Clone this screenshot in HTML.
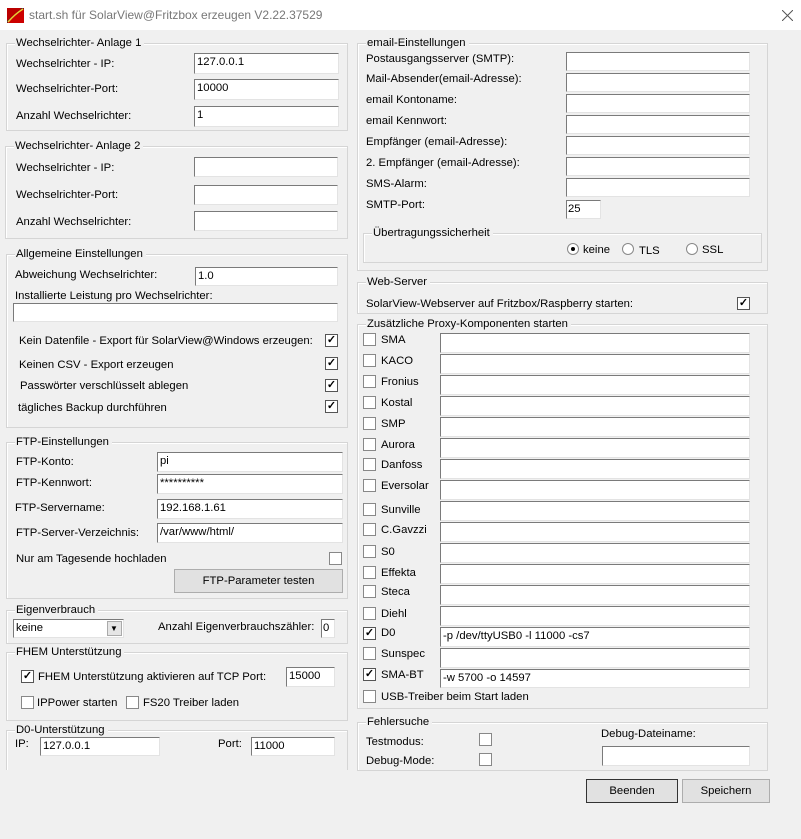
<!DOCTYPE html>
<html><head><meta charset="utf-8"><style>
*{box-sizing:border-box;margin:0;padding:0}
body{width:801px;height:839px;background:#f0f0f0;font-family:"Liberation Sans",Arial,sans-serif;font-size:11.3px;color:#000;position:relative;overflow:hidden}
.a{position:absolute}
.t{position:absolute;line-height:14px;white-space:nowrap}
.i{position:absolute;background:#fff;border:1px solid;border-color:#7a7a7a #e3e3e3 #e3e3e3 #7a7a7a;line-height:17px;padding-left:2px;white-space:nowrap;overflow:hidden}
.g{position:absolute;border:1px solid #d5d5d5;box-shadow:inset 1px 1px 0 #fff}
.gl{position:absolute;top:-8px;left:8px;background:#f0f0f0;padding:0 3px 0 1px;line-height:14px;white-space:nowrap}
.c{position:absolute;width:13px;height:13px;background:#fff;border:1px solid #555;font-size:11px;line-height:11px;text-align:center;font-weight:bold}
.b{position:absolute;background:#e1e1e1;border:1px solid #adadad;text-align:center;line-height:22px}
.r{position:absolute;width:12px;height:12px;border-radius:50%;background:#fff;border:1px solid #888}
</style></head><body>
<div class="a" style="left:0;top:0;width:801px;height:30px;background:#fff"></div>
<svg class="a" style="left:7px;top:8px" width="17" height="15"><rect width="17" height="15" fill="#333"/><polygon points="0,15 17,0 17,15" fill="#c00"/><polygon points="0,0 15,0 0,13" fill="#b00"/><path d="M1 14 Q8 6 16 1" stroke="#ec3" stroke-width="1.5" fill="none"/></svg>
<div class="t" style="left:29px;top:8px;color:#777;font-size:12px">start.sh für SolarView@Fritzbox erzeugen V2.22.37529</div>
<svg class="a" style="left:782px;top:10px" width="11" height="11"><path d="M0 0L11 11M11 0L0 11" stroke="#555" stroke-width="1"/></svg>

<!-- Left column -->
<div class="g" style="left:6px;top:43px;width:342px;height:88px"><div class="gl">Wechselrichter- Anlage 1</div></div>
<div class="t" style="left:16px;top:57px">Wechselrichter - IP:</div><div class="i" style="left:194px;top:53px;width:145px;height:21px">127.0.0.1</div>
<div class="t" style="left:16px;top:82px">Wechselrichter-Port:</div><div class="i" style="left:194px;top:79px;width:145px;height:21px">10000</div>
<div class="t" style="left:16px;top:109px">Anzahl Wechselrichter:</div><div class="i" style="left:194px;top:106px;width:145px;height:21px">1</div>

<div class="g" style="left:5px;top:146px;width:343px;height:93px"><div class="gl">Wechselrichter- Anlage 2</div></div>
<div class="t" style="left:16px;top:161px">Wechselrichter - IP:</div><div class="i" style="left:194px;top:157px;width:144px;height:20px"></div>
<div class="t" style="left:16px;top:188px">Wechselrichter-Port:</div><div class="i" style="left:194px;top:185px;width:144px;height:20px"></div>
<div class="t" style="left:16px;top:215px">Anzahl Wechselrichter:</div><div class="i" style="left:194px;top:211px;width:144px;height:20px"></div>

<div class="g" style="left:6px;top:254px;width:342px;height:174px"><div class="gl">Allgemeine Einstellungen</div></div>
<div class="t" style="left:15px;top:268px">Abweichung Wechselrichter:</div><div class="i" style="left:195px;top:267px;width:143px;height:19px">1.0</div>
<div class="t" style="left:15px;top:289px">Installierte Leistung pro Wechselrichter:</div><div class="i" style="left:13px;top:303px;width:325px;height:19px"></div>
<div class="t" style="left:19px;top:334px">Kein Datenfile - Export für SolarView@Windows erzeugen:</div><div class="c" style="left:325px;top:334px">✓</div>
<div class="t" style="left:19px;top:358px">Keinen CSV - Export erzeugen</div><div class="c" style="left:325px;top:357px">✓</div>
<div class="t" style="left:20px;top:379px">Passwörter verschlüsselt ablegen</div><div class="c" style="left:325px;top:379px">✓</div>
<div class="t" style="left:18px;top:401px">tägliches Backup durchführen</div><div class="c" style="left:325px;top:400px">✓</div>

<div class="g" style="left:6px;top:442px;width:342px;height:157px"><div class="gl">FTP-Einstellungen</div></div>
<div class="t" style="left:16px;top:455px">FTP-Konto:</div><div class="i" style="left:157px;top:452px;width:186px;height:20px">pi</div>
<div class="t" style="left:16px;top:476px">FTP-Kennwort:</div><div class="i" style="left:157px;top:474px;width:186px;height:20px">**********</div>
<div class="t" style="left:15px;top:501px">FTP-Servername:</div><div class="i" style="left:157px;top:499px;width:186px;height:20px">192.168.1.61</div>
<div class="t" style="left:16px;top:526px">FTP-Server-Verzeichnis:</div><div class="i" style="left:157px;top:523px;width:186px;height:20px">/var/www/html/</div>
<div class="t" style="left:16px;top:552px">Nur am Tagesende hochladen</div><div class="c" style="left:329px;top:552px;border-color:#888"></div>
<div class="b" style="left:174px;top:569px;width:169px;height:24px">FTP-Parameter testen</div>

<div class="g" style="left:6px;top:610px;width:342px;height:34px"><div class="gl">Eigenverbrauch</div></div>
<div class="i" style="left:13px;top:619px;width:111px;height:19px">keine</div>
<div class="a" style="left:107px;top:621px;width:15px;height:15px;background:#e5e5e5;border:1px solid #aaa"></div><div class="t" style="left:110px;top:622px;font-size:8px">▼</div>
<div class="t" style="left:158px;top:620px">Anzahl Eigenverbrauchszähler:</div><div class="i" style="left:321px;top:619px;width:14px;height:19px;padding-left:1px">0</div>

<div class="g" style="left:6px;top:652px;width:342px;height:69px"><div class="gl">FHEM Unterstützung</div></div>
<div class="c" style="left:21px;top:670px">✓</div><div class="t" style="left:38px;top:670px">FHEM Unterstützung aktivieren auf TCP Port:</div><div class="i" style="left:286px;top:667px;width:49px;height:20px">15000</div>
<div class="c" style="left:21px;top:696px;border-color:#888"></div><div class="t" style="left:37px;top:696px">IPPower starten</div>
<div class="c" style="left:126px;top:696px;border-color:#888"></div><div class="t" style="left:143px;top:696px">FS20 Treiber laden</div>

<div class="g" style="left:6px;top:730px;width:342px;height:40px;border-bottom:none"><div class="gl">D0-Unterstützung</div></div>
<div class="t" style="left:15px;top:737px">IP:</div><div class="i" style="left:40px;top:737px;width:120px;height:19px">127.0.0.1</div>
<div class="t" style="left:218px;top:737px">Port:</div><div class="i" style="left:251px;top:737px;width:84px;height:19px">11000</div>

<!-- Right column -->
<div class="g" style="left:357px;top:43px;width:411px;height:228px"><div class="gl">email-Einstellungen</div></div>
<div class="t" style="left:366px;top:52px">Postausgangsserver (SMTP):</div><div class="i" style="left:566px;top:52px;width:184px;height:19px"></div>
<div class="t" style="left:366px;top:72px">Mail-Absender(email-Adresse):</div><div class="i" style="left:566px;top:73px;width:184px;height:19px"></div>
<div class="t" style="left:366px;top:93px">email Kontoname:</div><div class="i" style="left:566px;top:94px;width:184px;height:19px"></div>
<div class="t" style="left:366px;top:114px">email Kennwort:</div><div class="i" style="left:566px;top:115px;width:184px;height:19px"></div>
<div class="t" style="left:366px;top:135px">Empfänger (email-Adresse):</div><div class="i" style="left:566px;top:136px;width:184px;height:19px"></div>
<div class="t" style="left:366px;top:156px">2. Empfänger (email-Adresse):</div><div class="i" style="left:566px;top:157px;width:184px;height:19px"></div>
<div class="t" style="left:366px;top:177px">SMS-Alarm:</div><div class="i" style="left:566px;top:178px;width:184px;height:19px"></div>
<div class="t" style="left:366px;top:198px">SMTP-Port:</div><div class="i" style="left:566px;top:200px;width:35px;height:19px;padding-left:1px">25</div>
<div class="g" style="left:363px;top:233px;width:399px;height:30px"><div class="gl">Übertragungssicherheit</div></div>
<div class="r" style="left:567px;top:243px"></div><div class="a" style="left:571px;top:247px;width:4px;height:4px;background:#000;border-radius:50%"></div><div class="t" style="left:583px;top:243px">keine</div>
<div class="r" style="left:622px;top:243px"></div><div class="t" style="left:639px;top:244px">TLS</div>
<div class="r" style="left:686px;top:243px"></div><div class="t" style="left:702px;top:243px">SSL</div>

<div class="g" style="left:357px;top:282px;width:411px;height:32px"><div class="gl">Web-Server</div></div>
<div class="t" style="left:366px;top:297px">SolarView-Webserver auf Fritzbox/Raspberry starten:</div><div class="c" style="left:737px;top:297px">✓</div>

<div class="g" style="left:357px;top:324px;width:411px;height:385px"><div class="gl">Zusätzliche Proxy-Komponenten starten</div></div>
<div class="c" style="left:363px;top:333px;border-color:#888"></div><div class="t" style="left:381px;top:333px">SMA</div><div class="i" style="left:440px;top:333px;width:310px;height:20px"></div>
<div class="c" style="left:363px;top:354px;border-color:#888"></div><div class="t" style="left:381px;top:354px">KACO</div><div class="i" style="left:440px;top:354px;width:310px;height:20px"></div>
<div class="c" style="left:363px;top:375px;border-color:#888"></div><div class="t" style="left:381px;top:375px">Fronius</div><div class="i" style="left:440px;top:375px;width:310px;height:20px"></div>
<div class="c" style="left:363px;top:396px;border-color:#888"></div><div class="t" style="left:381px;top:396px">Kostal</div><div class="i" style="left:440px;top:396px;width:310px;height:20px"></div>
<div class="c" style="left:363px;top:417px;border-color:#888"></div><div class="t" style="left:381px;top:417px">SMP</div><div class="i" style="left:440px;top:417px;width:310px;height:20px"></div>
<div class="c" style="left:363px;top:438px;border-color:#888"></div><div class="t" style="left:381px;top:438px">Aurora</div><div class="i" style="left:440px;top:438px;width:310px;height:20px"></div>
<div class="c" style="left:363px;top:458px;border-color:#888"></div><div class="t" style="left:381px;top:458px">Danfoss</div><div class="i" style="left:440px;top:459px;width:310px;height:20px"></div>
<div class="c" style="left:363px;top:479px;border-color:#888"></div><div class="t" style="left:381px;top:479px">Eversolar</div><div class="i" style="left:440px;top:480px;width:310px;height:20px"></div>
<div class="c" style="left:363px;top:503px;border-color:#888"></div><div class="t" style="left:381px;top:503px">Sunville</div><div class="i" style="left:440px;top:501px;width:310px;height:20px"></div>
<div class="c" style="left:363px;top:523px;border-color:#888"></div><div class="t" style="left:381px;top:523px">C.Gavzzi</div><div class="i" style="left:440px;top:522px;width:310px;height:20px"></div>
<div class="c" style="left:363px;top:545px;border-color:#888"></div><div class="t" style="left:381px;top:545px">S0</div><div class="i" style="left:440px;top:543px;width:310px;height:20px"></div>
<div class="c" style="left:363px;top:566px;border-color:#888"></div><div class="t" style="left:381px;top:566px">Effekta</div><div class="i" style="left:440px;top:564px;width:310px;height:20px"></div>
<div class="c" style="left:363px;top:585px;border-color:#888"></div><div class="t" style="left:381px;top:585px">Steca</div><div class="i" style="left:440px;top:585px;width:310px;height:20px"></div>
<div class="c" style="left:363px;top:607px;border-color:#888"></div><div class="t" style="left:381px;top:607px">Diehl</div><div class="i" style="left:440px;top:606px;width:310px;height:20px"></div>
<div class="c" style="left:363px;top:627px">✓</div><div class="t" style="left:381px;top:626px">D0</div><div class="i" style="left:440px;top:627px;width:310px;height:20px">-p /dev/ttyUSB0 -l 11000 -cs7</div>
<div class="c" style="left:363px;top:647px;border-color:#888"></div><div class="t" style="left:381px;top:647px">Sunspec</div><div class="i" style="left:440px;top:648px;width:310px;height:20px"></div>
<div class="c" style="left:363px;top:668px">✓</div><div class="t" style="left:381px;top:668px">SMA-BT</div><div class="i" style="left:440px;top:669px;width:310px;height:19px">-w 5700 -o 14597</div>
<div class="c" style="left:363px;top:690px;border-color:#888"></div><div class="t" style="left:381px;top:690px">USB-Treiber beim Start laden</div>

<div class="g" style="left:357px;top:722px;width:411px;height:49px"><div class="gl">Fehlersuche</div></div>
<div class="t" style="left:366px;top:735px">Testmodus:</div><div class="c" style="left:479px;top:733px;border-color:#888"></div>
<div class="t" style="left:366px;top:754px">Debug-Mode:</div><div class="c" style="left:479px;top:753px;border-color:#888"></div>
<div class="t" style="left:601px;top:727px">Debug-Dateiname:</div><div class="i" style="left:602px;top:746px;width:148px;height:20px"></div>

<div class="b" style="left:586px;top:779px;width:92px;height:24px;border:1px solid #333">Beenden</div>
<div class="b" style="left:682px;top:779px;width:88px;height:24px">Speichern</div>
</body></html>
